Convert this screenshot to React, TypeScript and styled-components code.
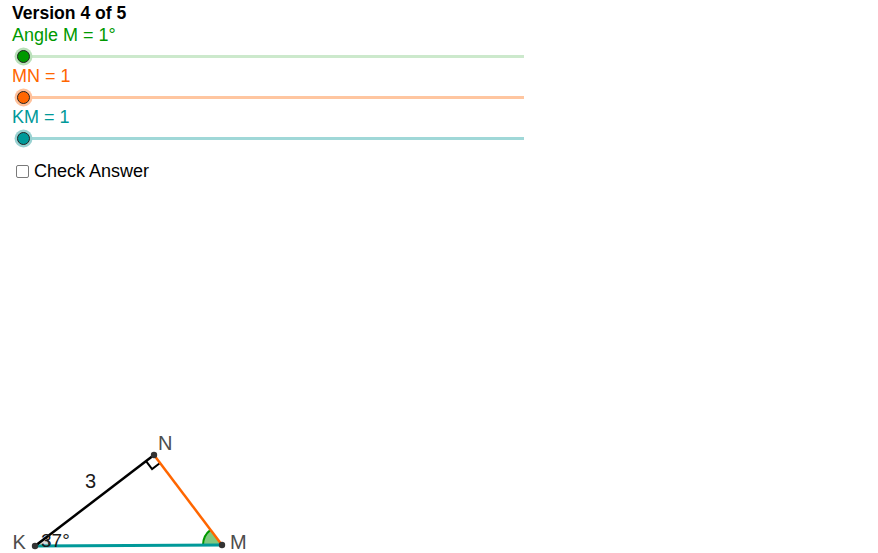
import React, { useState } from "react";
import styled, { createGlobalStyle } from "styled-components";

const GlobalStyle = createGlobalStyle`
  html, body {
    margin: 0;
    padding: 0;
    background: #ffffff;
  }
  body {
    font-family: "Liberation Sans", Arial, sans-serif;
    overflow: hidden;
  }
`;

const Page = styled.div`
  width: 878px;
  height: 553px;
  display: flex;
  flex-direction: column;
  background: #ffffff;
  overflow: hidden;
`;

const Controls = styled.div`
  height: 185px;
  flex: none;
  padding: 3px 0 0 12px;
  box-sizing: border-box;
  display: flex;
  flex-direction: column;
`;

const Title = styled.div`
  font-size: 17.6px;
  font-weight: bold;
  line-height: 21px;
  color: #000000;
`;

const SliderBlock = styled.div`
  display: flex;
  flex-direction: column;
`;

const SliderLabel = styled.div<{ $color: string }>`
  font-size: 18px;
  line-height: 23px;
  color: ${(p) => p.$color};
  white-space: nowrap;
`;

const SliderRow = styled.div`
  height: 18px;
  width: 512px;
  position: relative;
  display: flex;
  align-items: center;
`;

const Track = styled.div<{ $color: string }>`
  margin-left: 6px;
  flex: 1;
  height: 3px;
  background: ${(p) => p.$color};
`;

const Knob = styled.div<{ $color: string; $halo: string }>`
  position: absolute;
  top: 50%;
  width: 11px;
  height: 11px;
  margin: -6.5px 0 0 -6.5px;
  border-radius: 50%;
  background: ${(p) => p.$color};
  border: 1px solid #222222;
  box-shadow: 0 0 0 2.5px ${(p) => p.$halo};
`;

const CheckRow = styled.label`
  margin-top: 13px;
  display: flex;
  align-items: center;
  gap: 5px;
  font-size: 18px;
  line-height: 22px;
  color: #000000;
  cursor: pointer;
`;

const Box = styled.span<{ $on: boolean }>`
  margin-left: 4px;
  width: 11px;
  height: 11px;
  border: 1.5px solid #7a7a7a;
  border-radius: 2px;
  background: ${(p) => (p.$on ? "#6e7cd6" : "#ffffff")};
`;

const Canvas = styled.svg`
  flex: 1;
  display: block;
  width: 878px;
`;

type SliderDef = {
  label: string;
  text: string;
  track: string;
  halo: string;
  knob: string;
  value: number;
};

const sliders: SliderDef[] = [
  { label: "Angle M = 1°", text: "#009900", track: "#cce9cc", halo: "#b9e0b9", knob: "#009900", value: 0 },
  { label: "MN = 1", text: "#ff6600", track: "#ffc6a0", halo: "#ffc09a", knob: "#ff6600", value: 0 },
  { label: "KM = 1", text: "#009999", track: "#a0d8d8", halo: "#99d1d1", knob: "#009999", value: 0 },
];

const K = { x: 35, y: 546 };
const N = { x: 154, y: 455 };
const M = { x: 222, y: 545 };

const unit = (a: { x: number; y: number }, b: { x: number; y: number }) => {
  const dx = b.x - a.x;
  const dy = b.y - a.y;
  const l = Math.hypot(dx, dy);
  return { x: dx / l, y: dy / l };
};

const Triangle = () => {
  const nk = unit(N, K);
  const nm = unit(N, M);
  const s = 10;
  const sq = [
    [N.x + nk.x * s, N.y + nk.y * s],
    [N.x + nk.x * s + nm.x * s, N.y + nk.y * s + nm.y * s],
    [N.x + nm.x * s, N.y + nm.y * s],
  ];

  const mk = unit(M, K);
  const mn = unit(M, N);
  const rM = 19;
  const mA = { x: M.x + mk.x * rM, y: M.y + mk.y * rM };
  const mB = { x: M.x + mn.x * rM, y: M.y + mn.y * rM };

  const km = unit(K, M);
  const kn = unit(K, N);
  const rK = 14;
  const kA = { x: K.x + km.x * rK, y: K.y + km.y * rK };
  const kB = { x: K.x + kn.x * rK, y: K.y + kn.y * rK };

  return (
    <Canvas viewBox="0 185 878 368" preserveAspectRatio="xMinYMin meet">
      <path
        d={`M${K.x} ${K.y} L${kA.x} ${kA.y} A${rK} ${rK} 0 0 0 ${kB.x} ${kB.y} Z`}
        fill="#b5b5b5"
        fillOpacity={0.5}
        stroke="#444444"
        strokeWidth={1.5}
      />
      <path
        d={`M${M.x} ${M.y} L${mA.x} ${mA.y} A${rM} ${rM} 0 0 1 ${mB.x} ${mB.y} Z`}
        fill="#7fc97f"
        stroke="none"
      />
      <path
        d={`M${mA.x} ${mA.y} A${rM} ${rM} 0 0 1 ${mB.x} ${mB.y}`}
        fill="none"
        stroke="#009900"
        strokeWidth={2}
      />
      <polyline
        points={sq.map((p) => p.join(",")).join(" ")}
        fill="none"
        stroke="#000000"
        strokeWidth={2}
      />
      <line x1={K.x} y1={K.y} x2={M.x} y2={M.y} stroke="#009999" strokeWidth={3} />
      <line x1={K.x} y1={K.y} x2={N.x} y2={N.y} stroke="#000000" strokeWidth={2.5} />
      <line x1={N.x} y1={N.y} x2={M.x} y2={M.y} stroke="#ff6600" strokeWidth={2.5} />
      <circle cx={K.x} cy={K.y} r={3.2} fill="#333333" />
      <circle cx={N.x} cy={N.y} r={3.2} fill="#333333" />
      <circle cx={M.x} cy={M.y} r={3.2} fill="#333333" />
      <g fontFamily="'Liberation Sans', Arial, sans-serif" fontSize={20}>
        <text x={158} y={450} fill="#4d4d4d">N</text>
        <text x={12.5} y={549} fill="#4d4d4d">K</text>
        <text x={230} y={549} fill="#4d4d4d">M</text>
        <text x={85} y={488} fill="#1a1a1a">3</text>
        <text x={41} y={547} fill="#1a1a1a" fontSize={19}>37°</text>
      </g>
    </Canvas>
  );
};

export default function App() {
  const [checked, setChecked] = useState(false);

  return (
    <Page>
      <GlobalStyle />
      <Controls>
        <Title>Version 4 of 5</Title>
        {sliders.map((s) => (
          <SliderBlock key={s.label}>
            <SliderLabel $color={s.text}>{s.label}</SliderLabel>
            <SliderRow>
              <Track $color={s.track} />
              <Knob
                $color={s.knob}
                $halo={s.halo}
                style={{ left: `${11 + s.value * 500}px` }}
              />
            </SliderRow>
          </SliderBlock>
        ))}
        <CheckRow onClick={() => setChecked(!checked)}>
          <Box $on={checked} />
          Check Answer
        </CheckRow>
      </Controls>
      <Triangle />
    </Page>
  );
}
